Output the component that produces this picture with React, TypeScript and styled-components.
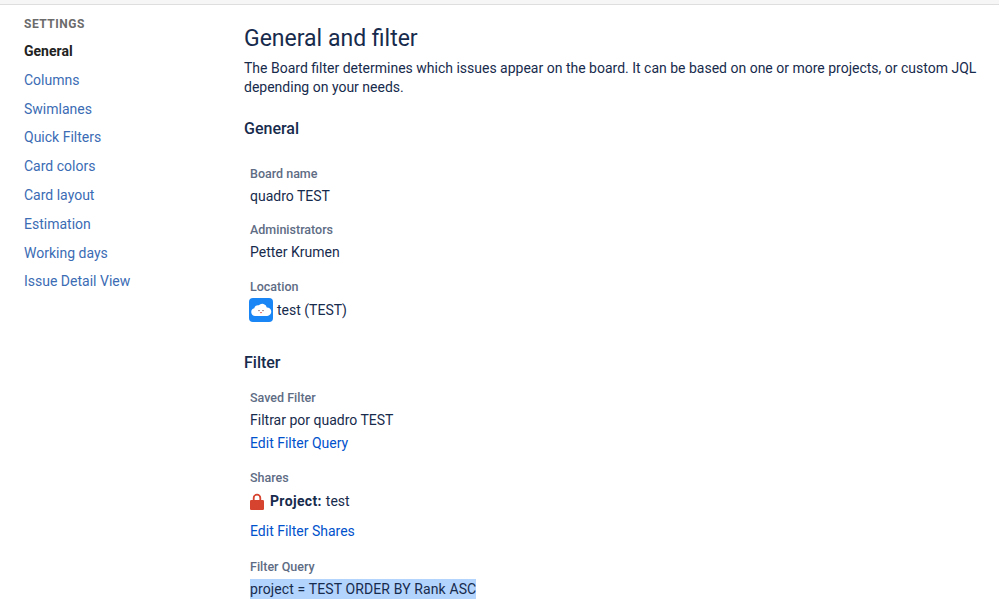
import React from 'react';
import styled, { createGlobalStyle } from 'styled-components';

const GlobalStyle = createGlobalStyle`
  html, body {
    margin: 0;
    padding: 0;
    background: #fff;
    font-family: Roboto, "Liberation Sans", sans-serif;
    overflow: hidden;
  }
`;

const Page = styled.div`
  width: 999px;
  height: 615px;
  overflow: hidden;
  display: flex;
  flex-direction: column;
`;

const TopEdge = styled.div`
  height: 4px;
  background: #f6f6f6;
  border-bottom: 1px solid #dedede;
  flex: none;
`;

const Body = styled.div`
  display: flex;
  flex: 1;
`;

const Sidebar = styled.nav`
  width: 244px;
  flex: none;
  padding: 12px 0 0 24px;
  box-sizing: border-box;
`;

const SideTitle = styled.div`
  font-size: 12px;
  line-height: 14px;
  font-weight: 700;
  color: #6b6b6b;
  letter-spacing: 0.5px;
  margin-bottom: 6px;
`;

const SideItem = styled.a<{ $active?: boolean }>`
  display: block;
  height: 28.8px;
  line-height: 28.8px;
  font-size: 14px;
  font-weight: ${(p) => (p.$active ? 700 : 400)};
  color: ${(p) => (p.$active ? '#222' : '#3b6cb4')};
`;

const Main = styled.main`
  flex: 1;
  padding: 19px 20px 0 0;
  color: #172b4d;
`;

const Title = styled.h1`
  margin: 0 0 5px;
  font-size: 23px;
  line-height: 30px;
  font-weight: 400;
  color: #172b4d;
`;

const Intro = styled.p`
  margin: 0 0 21px;
  font-size: 14px;
  line-height: 19px;
`;

const SectionTitle = styled.h2<{ $after: number }>`
  margin: 0 0 ${(p) => p.$after}px;
  font-size: 16px;
  line-height: 22px;
  font-weight: 500;
`;

const Field = styled.div<{ $gap?: number }>`
  padding-left: 6px;
  margin-bottom: ${(p) => p.$gap ?? 15}px;
`;

const Label = styled.div`
  font-size: 12.5px;
  line-height: 16px;
  font-weight: 500;
  color: #5e6c84;
  margin-bottom: 3px;
`;

const Value = styled.div`
  font-size: 14px;
  line-height: 23px;
  color: #172b4d;
`;

const QueryText = styled.span`
  background: #b3d4fc;
  letter-spacing: 0.12px;
  padding: 2px 0;
`;

const FilterLink = styled.a<{ $top?: number }>`
  display: block;
  margin-top: ${(p) => p.$top ?? 0}px;
  font-size: 14px;
  line-height: 23px;
  color: #0052cc;
`;

const IconRow = styled.div`
  display: flex;
  align-items: center;
  margin-top: 3px;
  font-size: 14px;
  line-height: 24px;
`;

const Avatar = styled.svg`
  width: 24px;
  height: 24px;
  margin: 0 4px 0 -1px;
  flex: none;
`;

const Lock = styled.svg`
  width: 14px;
  height: 17px;
  margin-right: 6px;
  flex: none;
`;

const Strong = styled.strong`
  font-weight: 700;
  letter-spacing: 0.35px;
  margin-right: 4px;
`;

const navItems = ['Columns', 'Swimlanes', 'Quick Filters', 'Card colors', 'Card layout', 'Estimation', 'Working days', 'Issue Detail View'];

export default function App() {
  return (
    <Page>
      <GlobalStyle />
      <TopEdge />
      <Body>
        <Sidebar>
          <SideTitle>SETTINGS</SideTitle>
          <SideItem $active>General</SideItem>
          {navItems.map((item) => (
            <SideItem key={item}>{item}</SideItem>
          ))}
        </Sidebar>
        <Main>
          <Title>General and filter</Title>
          <Intro>
            The Board filter determines which issues appear on the board. It can be based on one or more projects, or custom JQL depending on your needs.
          </Intro>
          <SectionTitle $after={26}>General</SectionTitle>
          <Field $gap={14}>
            <Label>Board name</Label>
            <Value>quadro TEST</Value>
          </Field>
          <Field>
            <Label>Administrators</Label>
            <Value>Petter Krumen</Value>
          </Field>
          <Field $gap={30}>
            <Label>Location</Label>
            <IconRow>
              <Avatar viewBox="0 0 24 24">
                <rect width="24" height="24" rx="4" fill="#1a85f5" />
                <path d="M6.2 18a3.9 3.9 0 0 1-.9-7.7 3.7 3.7 0 0 1 4.5-3 4.6 4.6 0 0 1 8 2.2 4.2 4.2 0 0 1 .4 8.5z" fill="#fff" />
                <circle cx="10" cy="12.6" r=".7" fill="#6b3b3b" />
                <circle cx="14" cy="12.6" r=".7" fill="#6b3b3b" />
                <path d="M10.8 14h2.4l-1.2 1.6z" fill="#e5534b" />
              </Avatar>
              test (TEST)
            </IconRow>
          </Field>
          <SectionTitle $after={16}>Filter</SectionTitle>
          <Field>
            <Label>Saved Filter</Label>
            <Value>Filtrar por quadro TEST</Value>
            <FilterLink>Edit Filter Query</FilterLink>
          </Field>
          <Field $gap={16}>
            <Label>Shares</Label>
            <IconRow>
              <Lock viewBox="0 0 14 17">
                <path d="M2.8 8V5a4.2 4.2 0 0 1 8.4 0v3H9.4V5a2.4 2.4 0 0 0-4.8 0v3z" fill="#d6432f" />
                <rect y="7" width="14" height="10" rx="1.2" fill="#d6432f" />
              </Lock>
              <Strong>Project:</Strong> test
            </IconRow>
            <FilterLink $top={7}>Edit Filter Shares</FilterLink>
          </Field>
          <Field>
            <Label>Filter Query</Label>
            <Value>
              <QueryText>project = TEST ORDER BY Rank ASC</QueryText>
            </Value>
          </Field>
        </Main>
      </Body>
    </Page>
  );
}
